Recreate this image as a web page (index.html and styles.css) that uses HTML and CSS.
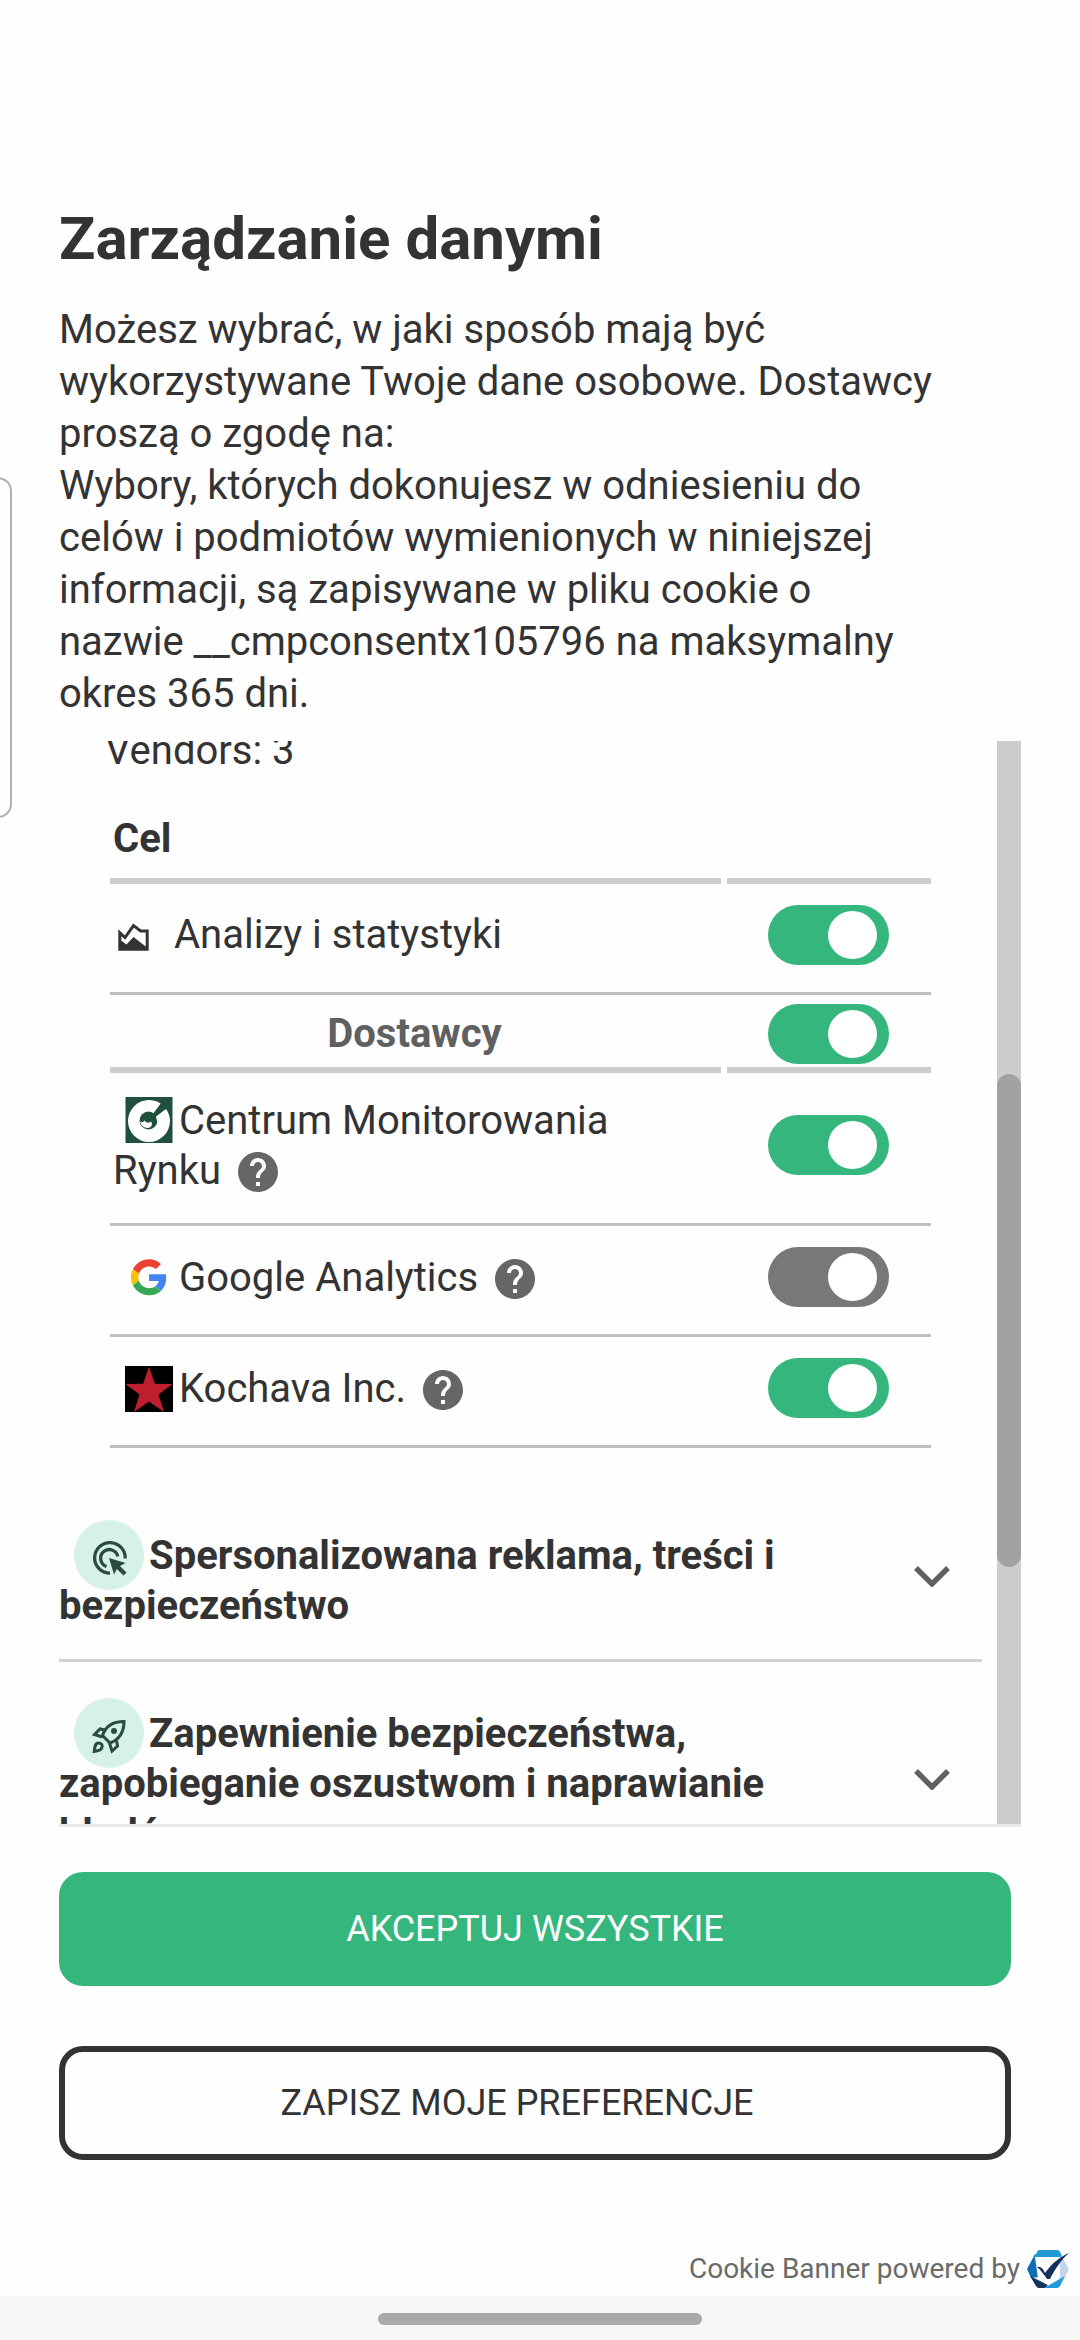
FILE: index.html
```html
<!DOCTYPE html>
<html lang="pl">
<head>
<meta charset="utf-8">
<title>Zarządzanie danymi</title>
<link rel="stylesheet" href="styles.css">
</head>
<body>
<svg class="defs" width="0" height="0">
  <symbol id="help" viewBox="2 2 20 20"><path d="M12 2C6.48 2 2 6.48 2 12s4.48 10 10 10 10-4.48 10-10S17.52 2 12 2zm1 17h-2v-2h2v2zm2.07-7.75l-.9.92C13.45 12.9 13 13.5 13 15h-2v-.5c0-1.1.45-2.1 1.17-2.83l1.24-1.26c.37-.36.59-.86.59-1.41 0-1.1-.9-2-2-2s-2 .9-2 2H8c0-2.21 1.79-4 4-4s4 1.79 4 4c0 .88-.36 1.68-.93 2.25z"/></symbol>
  <symbol id="chevron" viewBox="0 0 36 21"><path d="M2 2l16 16L34 2" fill="none" stroke="#606060" stroke-width="5.4"/></symbol>
</svg>
<div class="edge-handle"></div>
<main class="dialog">
  <h1 class="title">Zarządzanie danymi</h1>
  <p class="intro">Możesz wybrać, w jaki sposób mają być<br>wykorzystywane Twoje dane osobowe. Dostawcy<br>proszą o zgodę na:<br>Wybory, których dokonujesz w odniesieniu do<br>celów i podmiotów wymienionych w niniejszej<br>informacji, są zapisywane w pliku cookie o<br>nazwie __cmpconsentx105796 na maksymalny<br>okres 365 dni.</p>

  <div class="scroller">
    <div class="content">
      <p class="vendors">Vendors: 3</p>
      <div class="purposes">
        <div class="row head"><div class="cell name">Cel</div><div class="cell"></div></div>
        <div class="row purpose">
          <div class="cell name"><svg class="chart" viewBox="0 0 31 28"><path d="M1.800 26.200V9.800L7 14.600 15.500 2.600 22.600 8h6.600v18.200z" fill="none" stroke="#333" stroke-width="3"/><path d="M1 20.500l2-3 5.500 4 7-7.500L29 24.500V27H1z" fill="#333"/></svg>Analizy i statystyki</div>
          <div class="cell"><span class="toggle"></span></div>
        </div>
        <div class="row subhead">
          <div class="cell name">Dostawcy</div>
          <div class="cell"><span class="toggle"></span></div>
        </div>
        <div class="row vendor tall">
          <div class="cell name"><svg class="logo" viewBox="0 0 48 46"><path fill="#20503c" d="M.5 0h47v46H.5z"/><circle cx="24" cy="24" r="21" fill="#fff"/><circle cx="23.500" cy="23.500" r="9" fill="#20503c"/><path fill="#20503c" d="M28 17L36 6l4-4 7 6-6 5.500-9.500 8z"/><path fill="#fff" d="M31 19.500L41 12l3 7-12 5z"/><path d="M15 24.500c1.500 1 3.500 1 4.500-1 2 3 5 2.500 6.500 1 2 2.500.5 6.500-3 6.500s-7-2-8-6.500z" fill="#fff"/></svg>Centrum Monitorowania<br>Rynku<svg class="help"><use href="#help"/></svg></div>
          <div class="cell"><span class="toggle"></span></div>
        </div>
        <div class="row vendor">
          <div class="cell name"><svg class="logo" viewBox="-8 -7 64 61.300"><path fill="#EA4335" d="M24 9.500c3.540 0 6.710 1.220 9.210 3.600l6.850-6.850C35.900 2.380 30.470 0 24 0 14.620 0 6.510 5.380 2.560 13.220l7.980 6.190C12.430 13.720 17.740 9.500 24 9.500z"/><path fill="#4285F4" d="M46.980 24.550c0-1.570-.15-3.090-.38-4.550H24v9.020h12.940c-.58 2.960-2.260 5.480-4.780 7.180l7.730 6c4.510-4.180 7.090-10.360 7.090-17.650z"/><path fill="#FBBC05" d="M10.530 28.590c-.48-1.450-.76-2.990-.76-4.590s.27-3.140.76-4.590l-7.980-6.190C.92 16.460 0 20.120 0 24s.92 7.540 2.560 10.780l7.970-6.190z"/><path fill="#34A853" d="M24 48c6.480 0 11.930-2.130 15.890-5.810l-7.730-6c-2.150 1.450-4.920 2.300-8.160 2.300-6.260 0-11.570-4.220-13.470-9.910l-7.980 6.190C6.510 42.620 14.620 48 24 48z"/></svg>Google Analytics<svg class="help"><use href="#help"/></svg></div>
          <div class="cell"><span class="toggle locked"></span></div>
        </div>
        <div class="row vendor">
          <div class="cell name"><svg class="logo low" viewBox="0 0 48 46"><path d="M0 0h48v46H0z"/><path fill="#be1e2d" d="M24 .5l5.800 17.200L47.500 18 33.500 28.500 39 46 24 35.500 9 46l5.500-17.500L.5 18l17.700-.3z"/></svg>Kochava Inc.<svg class="help"><use href="#help"/></svg></div>
          <div class="cell"><span class="toggle"></span></div>
        </div>
      </div>

      <section class="group">
        <h2 class="group-title"><svg class="badge" viewBox="0 0 70 70"><circle cx="35" cy="35" r="35" fill="#d6f1e5"/><g fill="none" stroke="#2c4a3e" stroke-width="3.300"><path d="M36 53.200a15.300 15.300 0 1 1 15.200-14.700"/><path d="M32.500 46.500a8.700 8.700 0 1 1 11.300-10.200"/></g><path fill="#2c4a3e" d="M35 38l16.500 5-5.500 3 6.500 6.500-3 3-6.700-6.500-2.800 5.500z"/></svg>Spersonalizowana reklama, treści i<br>bezpieczeństwo</h2>
        <svg class="chevron"><use href="#chevron"/></svg>
      </section>
      <section class="group second">
        <h2 class="group-title"><svg class="badge" viewBox="0 0 70 70"><circle cx="35" cy="35" r="35" fill="#d6f1e5"/><g fill="none" stroke="#2c4a3e" stroke-width="3"><path d="M28.500 37.500c2.500-7.500 9-14 21.500-14 0 12-6 18.500-14 21.500z"/><path d="M31 32l-5-1-5.500 5.500 8 2.500M42.500 42.500l1 5.500-5.500 5-2.500-8"/><path d="M20.300 53.300c.5-3.800.5-8.300 4.200-8.300 5.500 0 4.500 7-1 7.700z"/></g><circle cx="40" cy="33" r="3" fill="#2c4a3e"/></svg>Zapewnienie bezpieczeństwa,<br>zapobieganie oszustwom i naprawianie<br>błędów</h2>
        <svg class="chevron"><use href="#chevron"/></svg>
      </section>
    </div>
    <div class="track"><div class="thumb"></div></div>
  </div>

  <button class="btn primary">AKCEPTUJ WSZYSTKIE</button>
  <button class="btn outline">ZAPISZ MOJE PREFERENCJE</button>
</main>
<footer class="powered"><span>Cookie Banner powered by</span><svg class="mark" viewBox="0 0 42 38"><path fill="#0f6fb5" d="M0 19L8 4l4 3v20l-8 1z"/><path fill="#2299d4" d="M12 0h18q2 0 3 2l3 6H7l3-6q1-2 2-2z"/><path fill="#c5d3ee" d="M34 5l8 14-4 8-7 2z"/><path fill="#12355f" d="M3 26l18 9-3 3h-6q-2 0-3-2z"/><path fill="#2299d4" d="M17 38l21-12-5 10q-1 2-3 2z"/><path fill="#fff" d="M8 7h25v20L21 35 11 29z"/><path fill="#12305b" d="M10 17c3-1 6 1 8 6C25 13 33 7 42 3c-8 7-14 16-19 26h-3C17 25 14 20 10 17z"/></svg></footer>
<div class="navbar"><div class="pill"></div></div>
</body>
</html>
```
FILE: styles.css
```css
* { box-sizing: border-box; margin: 0; padding: 0; }
body {
  width: 1080px; height: 2340px; overflow: hidden; position: relative;
  display: flex; flex-direction: column;
  background: #fefefe; color: #333;
  font-family: Roboto, sans-serif; font-size: 40px; line-height: 50px;
}
.defs { position: absolute; }
.edge-handle {
  position: absolute; left: -20px; top: 477px; width: 32px; height: 341px;
  border: 2px solid #b0b0b0; border-radius: 14px;
}
.dialog { padding: 200px 59px 0; display: flex; flex-direction: column; flex: none; height: 2161px; }
.title { font-size: 60px; line-height: 78px; font-weight: 700; white-space: nowrap; }
.intro { margin-top: 26px; line-height: 52px; white-space: nowrap; }

.scroller { display: flex; margin-top: 21px; height: 1086px; overflow: hidden; border-bottom: 3px solid #e9e9e9; flex: none; }
.content { width: 923px; height: 1083px; overflow: hidden; }
.track { margin-left: 15px; width: 24px; background: #cdcdcd; padding-top: 333px; }
.thumb { height: 493px; border-radius: 12px; background: #a2a2a2; }

.vendors { margin: -15px 0 0 46px; }
.purposes { margin: 38px 0 0 51px; width: 821px; }
.row { display: grid; grid-template-columns: 611px 204px; column-gap: 6px; }
.cell { padding-left: 41px; }
.cell.name { padding-left: 3px; white-space: nowrap; }
.head { height: 70px; }
.head .cell, .subhead .cell { border-bottom: 6px solid #cdcdcd; }
.head .name { font-weight: 700; }
.purpose { height: 111px; border-bottom: 3px solid #c0c0c0; }
.purpose .cell { padding-top: 21px; }
.purpose .name { padding-top: 26px; }
.subhead { height: 78px; }
.subhead .cell { padding-top: 9px; }
.subhead .name { padding: 14px 2px 0 0; font-weight: 700; color: #606060; text-align: center; }
.vendor { height: 111px; border-bottom: 3px solid #c0c0c0; }
.vendor .cell { padding-top: 21px; }
.vendor .name { padding-top: 27px; }
.vendor.tall { height: 153px; }
.tall .cell { padding-top: 42px; }
.tall .name { padding-top: 23px; }

.toggle { display: flex; justify-content: flex-end; width: 121px; height: 60px; padding: 6px 12px; border-radius: 30px; background: #35b67d; }
.toggle::after { content: ""; width: 49px; height: 48px; border-radius: 50%; background: #fff; }
.toggle.locked { background: #787878; }

.chart { width: 31px; height: 28px; vertical-align: top; margin: 13px 25px 0 5px; }
.logo { width: 48px; height: 46px; vertical-align: top; margin: 1px 6px 0 12px; }
.logo.low { margin-top: 2px; }
.help { width: 40px; height: 40px; vertical-align: top; margin: 6px 0 0 17px; fill: #666; }

.group { display: grid; grid-template-columns: 1fr 36px; padding-right: 32px; margin-top: 83px; height: 131px; border-bottom: 3px solid #d2d2d2; }
.group-title { font-size: 40px; line-height: 50px; font-weight: 700; white-space: nowrap; }
.badge { width: 70px; height: 70px; vertical-align: top; margin: -11px 5px -9px 15px; }
.chevron { width: 36px; height: 21px; margin-top: 35px; }
.group.second { margin-top: 47px; height: 190px; }
.second .chevron { margin-top: 60px; }

.btn { font: 400 36px/102px Roboto, sans-serif; height: 114px; width: 952px; border-radius: 24px; border: 6px solid #35b67d; flex: none; }
.primary { margin-top: 45px; background: #35b67d; color: #fff; }
.outline { margin-top: 60px; background: #fefefe; color: #333; border-color: #333; padding-right: 36px; }

.powered { display: flex; justify-content: flex-end; align-items: center; height: 40px; margin-top: 88px; padding-right: 11px; font-size: 28px; line-height: 40px; color: #6a6a6a; flex: none; }
.mark { width: 42px; height: 38px; margin-left: 7px; }
.navbar { margin-top: auto; height: 44px; background: #f6f6f6; display: flex; justify-content: center; padding-top: 17px; flex: none; }
.pill { width: 324px; height: 12px; border-radius: 6px; background: #a9a9a9; }
```
